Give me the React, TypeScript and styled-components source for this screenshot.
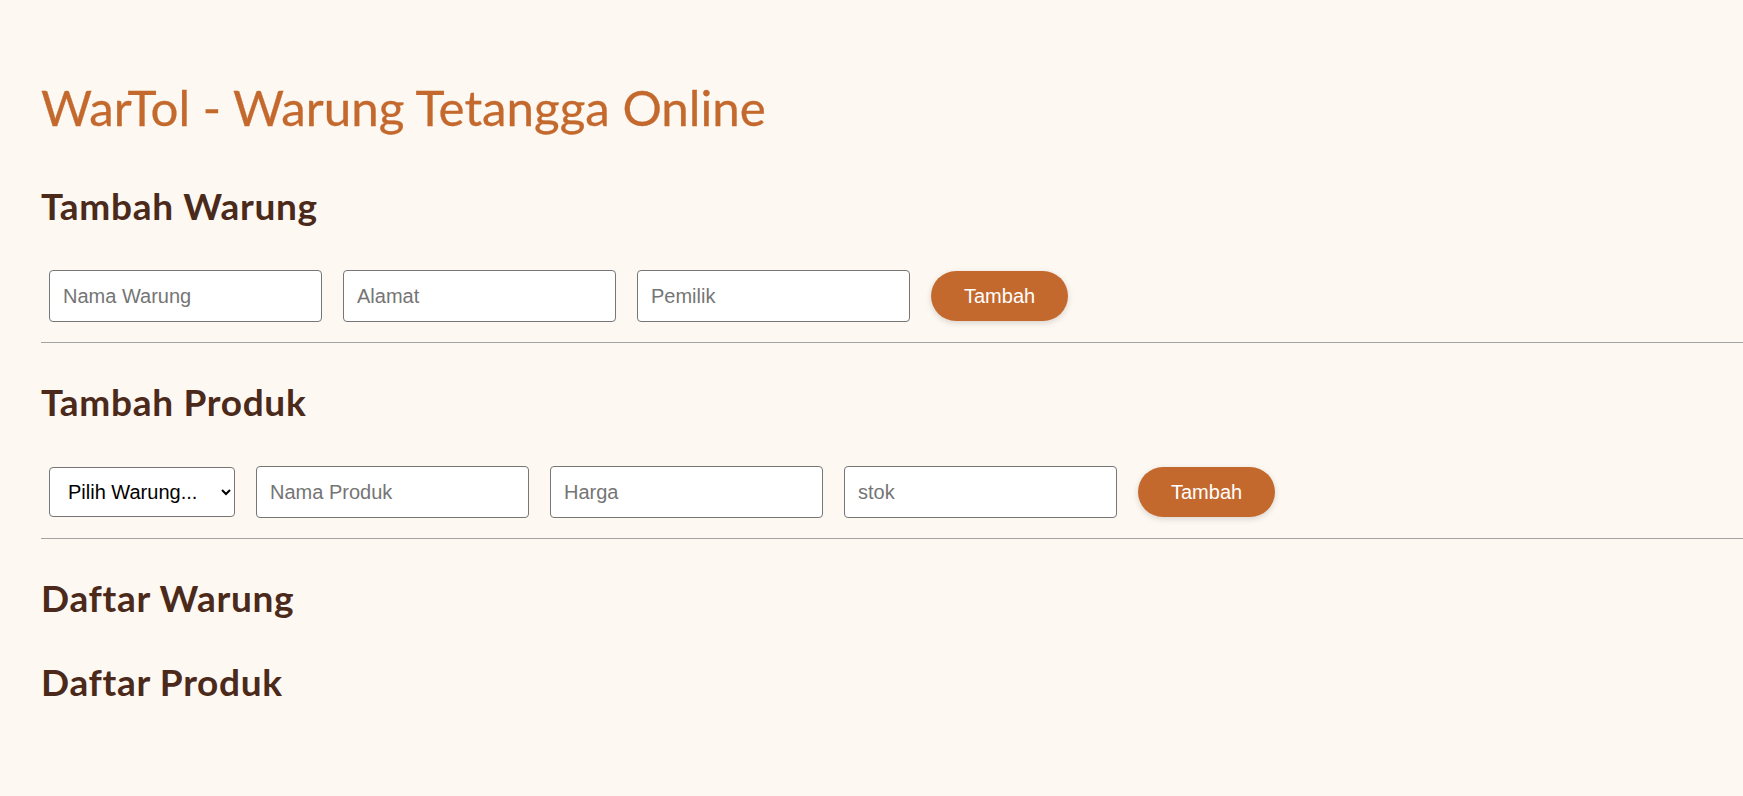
import { createGlobalStyle, styled } from "styled-components";

const GlobalStyle = createGlobalStyle({
  "html, body": {
    margin: 0,
    padding: 0,
    background: "#fdf8f1",
  },
  body: {
    fontFamily: 'Lato, "Open Sans", sans-serif',
  },
});

const App = () => {
  return (
    <Page>
      <GlobalStyle />
      <Title>WarTol - Warung Tetangga Online</Title>

      <Heading $top={47}>Tambah Warung</Heading>
      <FormRow>
        <Field placeholder="Nama Warung" />
        <Field placeholder="Alamat" />
        <Field placeholder="Pemilik" />
        <AddButton>Tambah</AddButton>
      </FormRow>
      <Divider />

      <Heading $top={37}>Tambah Produk</Heading>
      <FormRow>
        <Picker defaultValue="">
          <option value="">Pilih Warung...</option>
        </Picker>
        <Field placeholder="Nama Produk" />
        <Field placeholder="Harga" />
        <Field placeholder="stok" />
        <AddButton>Tambah</AddButton>
      </FormRow>
      <Divider />

      <Heading $top={37}>Daftar Warung</Heading>
      <Heading $top={40}>Daftar Produk</Heading>
    </Page>
  );
};

export default App;

const Page = styled.div({
  paddingLeft: "41px",
  paddingTop: "77px",
  paddingBottom: "80px",
  overflow: "hidden",
});

const Title = styled.h1({
  margin: 0,
  fontSize: "49.3px",
  lineHeight: "60px",
  fontWeight: 400,
  color: "#c4692e",
  WebkitTextStroke: "0.3px #c4692e",
});

const Heading = styled.h2<{ $top: number }>((p) => ({
  margin: `${p.$top}px 0 0 0`,
  fontSize: "37px",
  lineHeight: "44px",
  fontWeight: 700,
  letterSpacing: "0.7px",
  color: "#4b2a1b",
}));

const FormRow = styled.div({
  display: "flex",
  alignItems: "center",
  gap: "21px",
  marginTop: "42px",
  paddingLeft: "8px",
});

const Field = styled.input({
  boxSizing: "border-box",
  width: "273px",
  height: "52px",
  padding: "0 13px",
  border: "1px solid #767676",
  borderRadius: "4px",
  background: "#fff",
  fontFamily: '"Liberation Sans", Arial, sans-serif',
  fontSize: "20px",
  color: "#000",
  "&::placeholder": {
    color: "#757575",
  },
});

const Picker = styled.select({
  boxSizing: "border-box",
  width: "186px",
  height: "50px",
  padding: "0 8px 0 14px",
  border: "1px solid #767676",
  borderRadius: "4px",
  background: "#fff",
  fontFamily: '"Liberation Sans", Arial, sans-serif',
  fontSize: "20px",
  color: "#000",
});

const AddButton = styled.button({
  height: "50px",
  padding: "0 33px",
  border: "none",
  borderRadius: "25px",
  background: "#c4692e",
  color: "#fff",
  fontFamily: '"Liberation Sans", Arial, sans-serif',
  fontSize: "20px",
  boxShadow: "0 2px 6px rgba(0, 0, 0, 0.15)",
  cursor: "pointer",
});

const Divider = styled.div({
  marginTop: "20px",
  borderTop: "1px solid #a3a3a3",
  marginRight: "-41px",
});
